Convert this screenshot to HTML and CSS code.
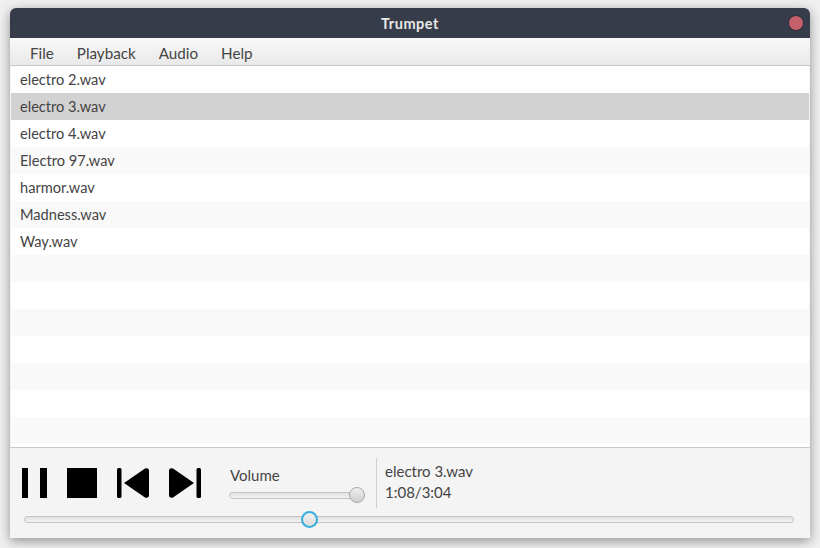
FILE: index.html
```html
<!DOCTYPE html>
<html lang="en">
<head>
    <meta charset="UTF-8">
    <title>Trumpet</title>
    <link rel="stylesheet" href="styles.css">
</head>
<body>
    <div class="window">
        <header class="titlebar">
            <span class="title">Trumpet</span>
            <span class="close"></span>
        </header>

        <nav class="menubar">
            <span>File</span>
            <span>Playback</span>
            <span>Audio</span>
            <span>Help</span>
        </nav>

        <ul class="playlist">
            <li>electro 2.wav</li>
            <li class="selected">electro 3.wav</li>
            <li>electro 4.wav</li>
            <li>Electro 97.wav</li>
            <li>harmor.wav</li>
            <li>Madness.wav</li>
            <li>Way.wav</li>
            <li></li>
            <li></li>
            <li></li>
            <li></li>
            <li></li>
            <li></li>
            <li></li>
        </ul>

        <footer class="controls">
            <div class="controls-top">
                <div class="buttons">
                    <!-- pause -->
                    <svg class="icon" width="26" height="30" viewBox="0 0 26 30"><rect x="0" y="0" width="6" height="30"/><rect x="18" y="0" width="7" height="30"/></svg>
                    <!-- stop -->
                    <svg class="icon" width="30" height="30" viewBox="0 0 30 30"><rect width="30" height="30"/></svg>
                    <!-- previous -->
                    <svg class="icon" width="32" height="30" viewBox="0 0 32 30"><rect x="0" y="0" width="4.5" height="30" rx="1.5"/><path d="M7 15 L28 0.6 Q32 -0.5 32 3 L32 27 Q32 30.5 28 29.4 Z"/></svg>
                    <!-- next -->
                    <svg class="icon" width="32" height="30" viewBox="0 0 32 30"><rect x="27.5" y="0" width="4.5" height="30" rx="1.5"/><path d="M25 15 L4 0.6 Q0 -0.5 0 3 L0 27 Q0 30.5 4 29.4 Z"/></svg>
                </div>

                <div class="volume">
                    <span class="volume-label">Volume</span>
                    <div class="slider volume-slider">
                        <span class="knob"></span>
                    </div>
                </div>

                <div class="now-playing">
                    <span>electro 3.wav</span>
                    <span>1:08/3:04</span>
                </div>
            </div>

            <div class="slider seek-slider">
                <span class="knob knob-focus"></span>
            </div>
        </footer>
    </div>
</body>
</html>
```

FILE: styles.css
```css
* {
    box-sizing: border-box;
}

body {
    margin: 0;
    padding: 8px 10px;
    height: 548px;
    overflow: hidden;
    background-color: #f0f0f0;
    font-family: Lato, "Open Sans", sans-serif;
    font-size: 15px;
    color: #444;
}

.window {
    height: 530px;
    display: flex;
    flex-direction: column;
    border-radius: 6px 6px 0 0;
    background-color: #f4f4f4;
    box-shadow: 0 3px 12px rgba(0, 0, 0, 0.4);
}

.titlebar {
    height: 30px;
    flex: none;
    display: flex;
    align-items: center;
    justify-content: center;
    position: relative;
    background-color: #363c4a;
    border-radius: 6px 6px 0 0;
}

.title {
    color: #e8e8e8;
    font-size: 14.5px;
    font-weight: 700;
    letter-spacing: 0.5px;
}

.close {
    position: absolute;
    right: 6px;
    top: 7px;
    width: 16px;
    height: 16px;
    border-radius: 50%;
    background-color: #c5616a;
    border: 1px solid #2a2e38;
}

.menubar {
    height: 28px;
    flex: none;
    display: flex;
    gap: 23px;
    align-items: center;
    padding: 2px 0 0 20px;
    font-size: 15.2px;
    background: linear-gradient(#f9f9f9, #e9e9e9);
    border-bottom: 1px solid #c6c6c6;
}

.playlist {
    height: 381px;
    flex: none;
    margin: 0 1px;
    padding: 0;
    list-style: none;
    font-size: 14.6px;
    background-color: #fff;
}

.playlist li {
    height: 27px;
    line-height: 27px;
    padding-left: 9px;
}

.playlist li:nth-child(even) {
    background-color: #f9f9f9;
}

.playlist li.selected {
    background-color: #d2d2d2;
}

.controls {
    flex: 1;
    border-top: 1px solid #c8c8c8;
}

.controls-top {
    display: flex;
    height: 62px;
    align-items: flex-start;
}

.buttons {
    display: flex;
    gap: 20px;
    margin: 20px 0 0 12px;
}

.buttons .icon {
    display: block;
}

.buttons .icon:nth-child(2) {
    margin-left: -1px;
}

.volume {
    width: 146px;
    margin-left: 29px;
    padding-top: 19px;
}

.volume-label {
    display: block;
    line-height: 16px;
}

.now-playing {
    height: 50px;
    margin-top: 10px;
    padding: 4px 0 0 8px;
    border-left: 1px solid #cfcfcf;
    display: flex;
    flex-direction: column;
    gap: 2px;
    line-height: 19px;
}

.slider {
    height: 7px;
    border-radius: 4px;
    position: relative;
    background: linear-gradient(#e0e0e0, #f4f4f4);
    border: 1px solid #c4c4c4;
}

.volume-slider {
    margin-top: 9px;
    margin-left: -1px;
    width: 136px;
}

.seek-slider {
    margin: 6px 16px 0 14px;
}

.knob {
    position: absolute;
    top: -6px;
    right: -1px;
    width: 16px;
    height: 16px;
    border-radius: 50%;
    background: linear-gradient(#f0f0f0, #cfcfcf);
    border: 1px solid #a8a8a8;
}

.knob-focus {
    right: auto;
    left: 276px;
    width: 17px;
    height: 17px;
    background: linear-gradient(#efefef, #dcdcdc);
    border: 2px solid #35b0dc;
}
```
